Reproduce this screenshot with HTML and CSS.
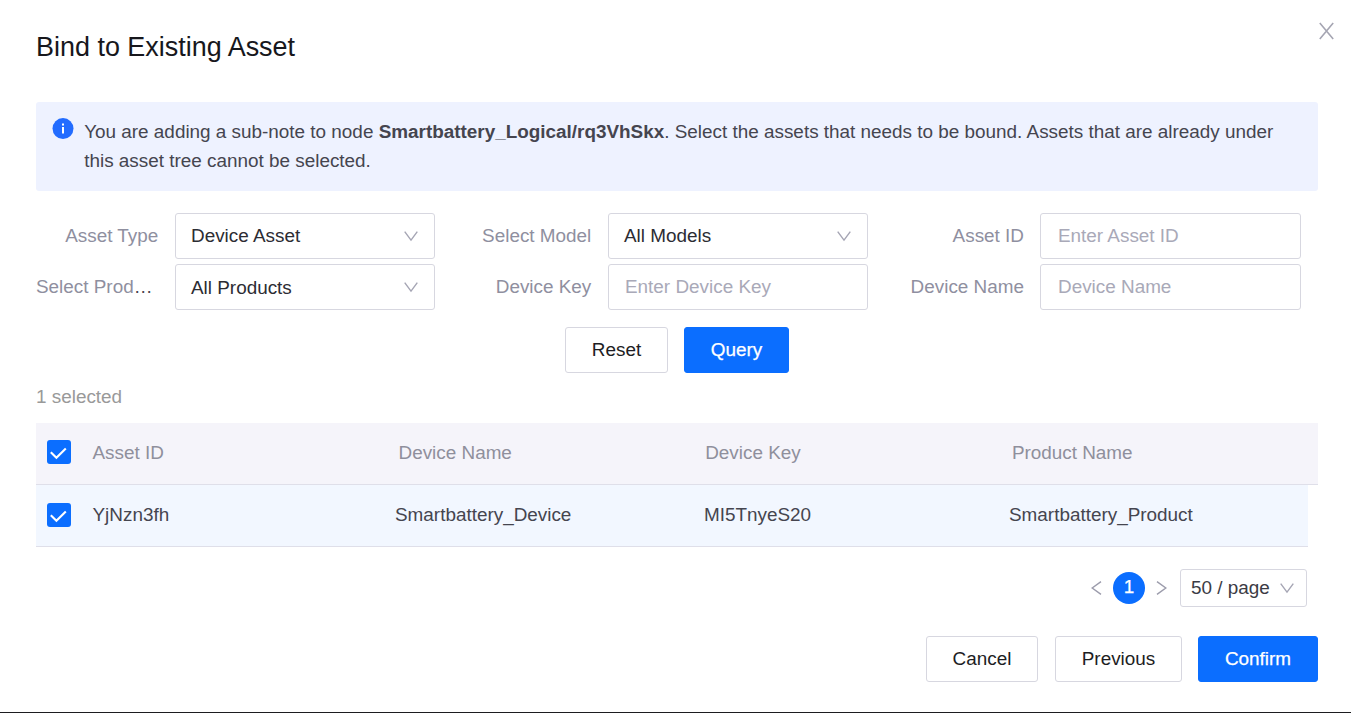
FILE: index.html
```html
<!DOCTYPE html>
<html lang="en">
<head>
<meta charset="utf-8">
<title>Bind to Existing Asset</title>
<link rel="stylesheet" href="styles.css">
</head>
<body>
<main class="modal">
  <header class="modal-header">
    <h1 class="title">Bind to Existing Asset</h1>
    <svg class="close" viewBox="0 0 16 18"><path d="M.8 1L14.2 17M14.2 1L.8 17"/></svg>
  </header>
  <section class="alert">
    <svg class="info" viewBox="0 0 22 22"><circle cx="11" cy="10.6" r="10.5"/><path d="M10 5.6h2v2h-2zM10 9h2v6.6h-2z"/></svg>
    <p class="alert-text">You are adding a sub-note to node <b>Smartbattery_Logical/rq3VhSkx</b>. Select the assets that needs to be bound. Assets that are already under<br>this asset tree cannot be selected.</p>
  </section>
  <section class="filters">
    <span class="label">Asset Type</span>
    <div class="field"><span>Device Asset</span><svg class="arrow" viewBox="0 0 14 11"><path d="M.7 .6L7 9.1 13.3 .6"/></svg></div>
    <span class="label">Select Model</span>
    <div class="field"><span>All Models</span><svg class="arrow" viewBox="0 0 14 11"><path d="M.7 .6L7 9.1 13.3 .6"/></svg></div>
    <span class="label">Asset ID</span>
    <div class="field hint wide">Enter Asset ID</div>
    <span class="label cut">Select Prod<span class="dots">…</span></span>
    <div class="field low"><span>All Products</span><svg class="arrow" viewBox="0 0 14 11"><path d="M.7 .6L7 9.1 13.3 .6"/></svg></div>
    <span class="label">Device Key</span>
    <div class="field hint">Enter Device Key</div>
    <span class="label">Device Name</span>
    <div class="field hint wide">Device Name</div>
  </section>
  <div class="actions">
    <button class="btn reset">Reset</button>
    <button class="btn primary query">Query</button>
  </div>
  <p class="selected">1 selected</p>
  <section class="table">
    <div class="row head">
      <span class="check"><svg viewBox="0 0 24 24"><path d="M3.8 12.2L9.4 17.8 18.8 8.4"/></svg></span>
      <span>Asset ID</span><span>Device Name</span><span>Device Key</span><span>Product Name</span>
    </div>
    <div class="row body">
      <span class="check"><svg viewBox="0 0 24 24"><path d="M3.8 12.2L9.4 17.8 18.8 8.4"/></svg></span>
      <span>YjNzn3fh</span><span>Smartbattery_Device</span><span>MI5TnyeS20</span><span>Smartbattery_Product</span>
    </div>
  </section>
  <nav class="pager">
    <svg class="step" viewBox="0 0 11 15"><path d="M10 .6L1.2 7 10 13.4"/></svg>
    <span class="page">1</span>
    <svg class="step" viewBox="0 0 11 15"><path d="M1 .6L9.8 7 1 13.4"/></svg>
    <div class="size"><span>50 / page</span><svg class="arrow" viewBox="0 0 14 11"><path d="M.7 .6L7 9.1 13.3 .6"/></svg></div>
  </nav>
  <footer class="footer">
    <button class="btn cancel">Cancel</button>
    <button class="btn previous">Previous</button>
    <button class="btn primary confirm">Confirm</button>
  </footer>
</main>
</body>
</html>
```
FILE: styles.css
```css
* { box-sizing: border-box; }
body { margin: 0; background: #fff; }
p, h1 { margin: 0; }
.modal {
  width: 1351px;
  height: 713px;
  padding: 0 33px 0 36px;
  border-bottom: 1px solid #1d1d20;
  font: 18.9px "Liberation Sans", Arial, sans-serif;
  color: #45454f;
  overflow: hidden;
}
svg { display: block; flex: none; fill: none; }
.modal-header { display: flex; justify-content: space-between; height: 102px; margin-right: -17px; }
.title { padding-top: 32px; font-size: 26.95px; line-height: 31px; font-weight: 400; color: #17171c; }
.close { width: 16px; height: 18px; margin-top: 22px; stroke: #a5a5b2; stroke-width: 1.6; }
.alert { display: flex; gap: 10px; height: 89px; padding: 15px 16px; border-radius: 3px; background: #eef2ff; }
.info { width: 22px; height: 22px; margin-top: 1px; }
.info circle { fill: #226cff; }
.info path { fill: #fff; }
.alert-text { padding-left: .2px; line-height: 29px; white-space: nowrap; }
.filters {
  display: grid;
  grid-template-columns: 139px 260px 173px 260px 172px 261px;
  grid-template-rows: 46px 46px;
  row-gap: 5px;
  margin-top: 22px;
  padding-bottom: 17px;
}
.label { padding-right: 16.7px; text-align: right; line-height: 45px; color: #8f8f9f; white-space: nowrap; }
.label:nth-child(6n + 5) { padding-right: 16px; }
.cut { text-align: left; padding-right: 0; }
.dots { color: #45454f; }
.field {
  display: flex;
  justify-content: space-between;
  height: 46px;
  padding: 0 16px 0 15px;
  border: 1px solid #d7d7e0;
  border-radius: 3px;
  line-height: 43px;
  color: #2c2c33;
}
.low { line-height: 45px; }
.hint { padding-left: 16px; color: #a9a9b8; }
.wide { padding-left: 17px; }
.arrow { width: 14px; height: 11px; align-self: center; stroke: #a5a5b4; stroke-width: 1.4; }
.actions { display: flex; gap: 16px; padding-left: 529px; }
.btn {
  height: 46px;
  padding: 0 0 1px;
  border: 1px solid #d7d7e0;
  border-radius: 3px;
  background: #fff;
  font: inherit;
  line-height: 42px;
  color: #1d1d23;
}
.primary { border-color: #0b6eff; background: #0b6eff; color: #fff; -webkit-text-stroke: .25px #fff; }
.reset { width: 103px; }
.query { width: 105px; }
.selected { height: 50px; line-height: 47px; color: #999; }
.table { height: 124px; }
.row { display: grid; grid-template-columns: 56.5px 306px 306.7px 306.7px 1fr; height: 62px; border-bottom: 1px solid #dfdfe9; line-height: 59px; white-space: nowrap; }
.head { background: #f5f4fa; color: #8f8f9c; }
.body { grid-template-columns: 56.5px 302.5px 309px 305px 1fr; margin-right: 10px; background: #f2f7ff; }
.check { width: 24px; height: 24px; margin: 17px 0 0 11px; border-radius: 3px; background: #0b6eff; }
.body .check { margin-top: 18px; }
.check svg { stroke: #fff; stroke-width: 2.1; }
.pager { display: flex; align-items: center; height: 38px; margin-top: 22px; padding-right: 11px; justify-content: flex-end; }
.step { width: 11px; height: 15px; stroke: #9c9cac; stroke-width: 1.4; }
.page { width: 32px; height: 32px; margin: 0 11px; border-radius: 50%; background: #0b6eff; color: #fff; text-align: center; line-height: 30px; -webkit-text-stroke: .25px #fff; }
.size { display: flex; justify-content: space-between; width: 127px; height: 38px; margin-left: 13px; padding: 0 12px 0 10px; border: 1px solid #d7d7e0; border-radius: 3px; line-height: 35px; color: #3b3b44; }
.footer { display: flex; justify-content: flex-end; margin-top: 29px; }
.cancel { width: 112px; margin-right: 17px; }
.previous { width: 127px; margin-right: 16px; }
.confirm { width: 120px; }
```
